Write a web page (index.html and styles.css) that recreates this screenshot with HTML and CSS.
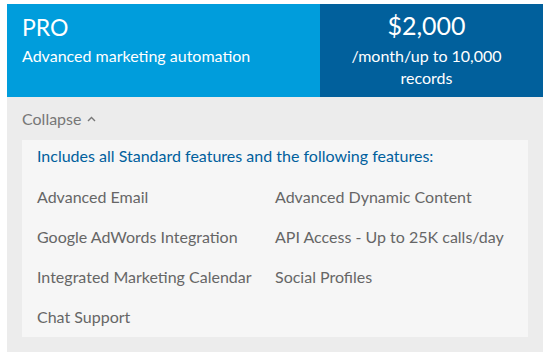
FILE: index.html
```html
<!DOCTYPE html>
<html lang="en">
<head>
  <meta charset="UTF-8" />
  <title>Pro plan</title>
  <link rel="stylesheet" href="styles.css">
</head>
<body>
<div class="plan">
  <header class="plan-head">
    <div class="plan-name">
      <h1>PRO</h1>
      <p>Advanced marketing automation</p>
    </div>
    <div class="plan-price">
      <div class="amount">$2,000</div>
      <div class="per">/month/up to 10,000<br>records</div>
    </div>
  </header>
  <div class="plan-body">
    <div class="toggle">Collapse
      <svg width="9" height="6" viewBox="0 0 9 6"><path d="M1 5 L4.5 1.5 L8 5" fill="none" stroke="#777" stroke-width="1.4"/></svg>
    </div>
    <div class="features">
      <h2>Includes all Standard features and the following features:</h2>
      <ul>
        <li>Advanced Email</li>
        <li>Advanced Dynamic Content</li>
        <li>Google AdWords Integration</li>
        <li>API Access - Up to 25K calls/day</li>
        <li>Integrated Marketing Calendar</li>
        <li>Social Profiles</li>
        <li>Chat Support</li>
      </ul>
    </div>
  </div>
</div>
</body>
</html>
```

FILE: styles.css
```css
body { margin: 0; background: #fff; font-family: "Lato", "Open Sans", sans-serif; }
.plan { width: 536px; margin: 4px 0 0 7px; }
.plan-head { display: flex; height: 93px; color: #fff; }
.plan-name { flex: 1; background: #009ddc; padding: 9px 15px; }
.plan-name h1 { margin: 0; font-size: 23px; font-weight: 400; line-height: 28px; }
.plan-name p { margin: 5px 0 0; font-size: 16px; line-height: 20px; }
.plan-price { width: 213px; padding: 7px 10px 0 0; background: #01609c; text-align: center; }
.amount { font-size: 25px; line-height: 28px; }
.per { margin-top: 6px; font-size: 16px; line-height: 22px; }
.plan-body { background: #ececec; padding: 12px 15px 15px; }
.toggle { color: #777; font-size: 16px; line-height: 20px; }
.toggle svg { margin-left: 1px; vertical-align: 3px; }
.features { margin-top: 11px; background: #f6f6f6; padding: 6px 15px 0; }
.features h2 { margin: 0 0 11px; color: #00609d; font-size: 16px; font-weight: 400; line-height: 20px; }
.features ul { display: grid; grid-template-columns: 1fr 1fr; margin: 0; padding: 0; list-style: none; }
.features li { color: #666; font-size: 16px; line-height: 40px; }
```
